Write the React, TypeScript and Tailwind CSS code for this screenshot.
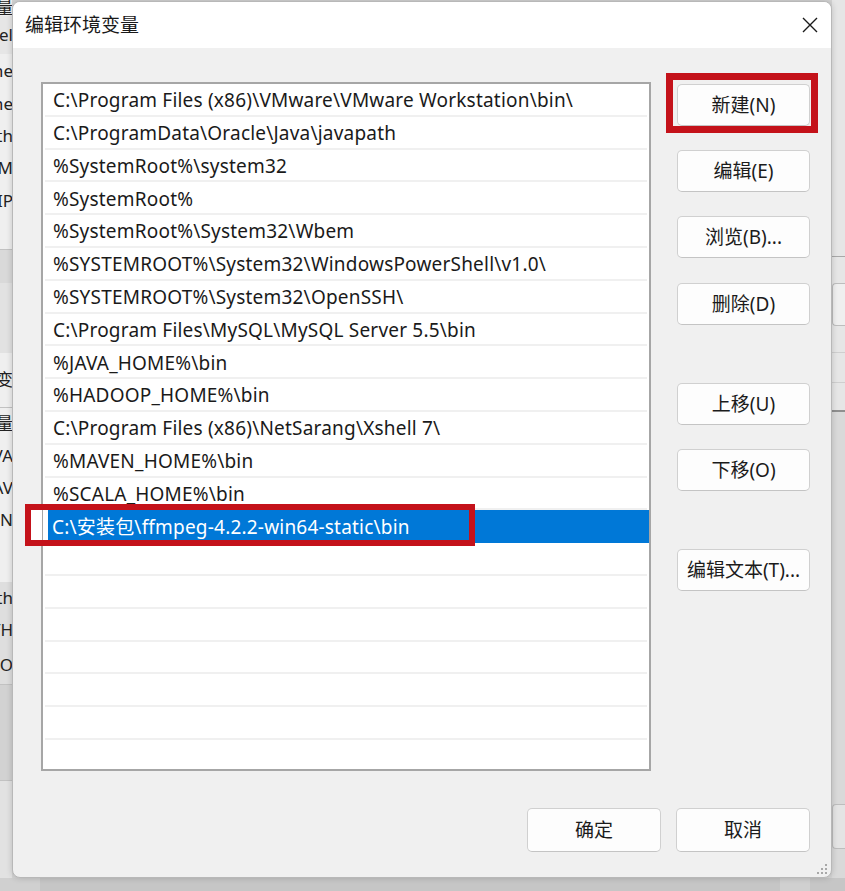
import * as React from "react";

const paths = [
  "C:\\Program Files (x86)\\VMware\\VMware Workstation\\bin\\",
  "C:\\ProgramData\\Oracle\\Java\\javapath",
  "%SystemRoot%\\system32",
  "%SystemRoot%",
  "%SystemRoot%\\System32\\Wbem",
  "%SYSTEMROOT%\\System32\\WindowsPowerShell\\v1.0\\",
  "%SYSTEMROOT%\\System32\\OpenSSH\\",
  "C:\\Program Files\\MySQL\\MySQL Server 5.5\\bin",
  "%JAVA_HOME%\\bin",
  "%HADOOP_HOME%\\bin",
  "C:\\Program Files (x86)\\NetSarang\\Xshell 7\\",
  "%MAVEN_HOME%\\bin",
  "%SCALA_HOME%\\bin",
];
const selected = "C:\\安装包\\ffmpeg-4.2.2-win64-static\\bin";

function Btn({ label, className = "" }: { label: string; className?: string }) {
  return (
    <button
      className={
        "w-[133px] h-[42px] rounded-[5px] border border-[#d0d0d0] border-b-[#c4c4c4] bg-[#fdfdfd] text-[19px] text-[#1b1b1b] flex items-center justify-center whitespace-nowrap " +
        className
      }
    >
      {label}
    </button>
  );
}

// clipped bits of the window behind the dialog
function Frag({ text, h, bg = "", line = false }: { text?: string; h: number; bg?: string; line?: boolean }) {
  return (
    <div
      className={"flex items-center justify-end overflow-hidden text-[17px] text-[#222] whitespace-nowrap " + bg + (line ? " border-b border-[#c2c2c2]" : "")}
      style={{ height: h }}
    >
      {text && <span className="-mr-[1px]">{text}</span>}
    </div>
  );
}

export default function App() {
  return (
    <div className="w-[845px] h-[891px] overflow-hidden bg-[#d4d4d4] font-['Noto_Sans','Noto_Sans_CJK_SC',sans-serif] relative flex flex-col">
      <div className="flex h-[878px]">
        {/* left strip */}
        <div className="w-[12px] flex flex-col bg-[#efefef]">
          <Frag text="变量" h={16} />
          <Frag text="Model" h={38} bg="bg-[#e6e6e6]" />
          <Frag text="Name" h={33} />
          <Frag text="Name" h={33} />
          <Frag text="Path" h={32} />
          <Frag text="VM" h={32} />
          <Frag text="IP" h={34} />
          <Frag h={32} line />
          <Frag h={33} bg="bg-[#d9d9d9]" />
          <Frag h={70} bg="bg-[#e2e2e2]" />
          <Frag text="变" h={55} line />
          <Frag text="变量" h={32} />
          <Frag text="JAVA" h={32} />
          <Frag text="JAV" h={31} />
          <Frag text="UN" h={33} />
          <Frag h={46} />
          <Frag text="Path" h={32} bg="bg-[#dedede]" />
          <Frag text="PATH" h={32} bg="bg-[#dedede]" />
          <Frag text="O" h={39} bg="bg-[#dedede]" line />
          <Frag h={96} bg="bg-[#d2d2d2]" line />
          <div className="flex-1 bg-[#e2e2e2]" />
        </div>

        {/* dialog */}
        <div className="w-[820px] mt-[1px] rounded-[8px] border border-[#b8b8b8] bg-[#f0f0f0] flex flex-col relative overflow-hidden shadow-[0_0_6px_rgba(0,0,0,0.18)]">
          <div className="h-[46px] bg-white flex items-center justify-between pl-[12px] pr-[13px]">
            <span className="text-[19px] text-[#1a1a1a]">编辑环境变量</span>
            <svg width="16" height="16" viewBox="0 0 16 16">
              <path d="M1 1 L15 15 M15 1 L1 15" stroke="#1a1a1a" strokeWidth="1.4" fill="none" />
            </svg>
          </div>

          <div className="flex-1 flex flex-col pl-[28px] pt-[34px] pr-[21px]">
            <div className="flex">
              <div className="w-[610px] h-[689px] border-2 border-[#a6a6a6] bg-white overflow-hidden">
                {paths.map((p) => (
                  <div key={p} className="h-[32.8px] mx-[2px] border-b-2 border-[#f0f0f0] flex items-center pl-[8px] pt-[2px] text-[19px] tracking-[0.2px] text-[#1a1a1a] whitespace-nowrap">
                    {p}
                  </div>
                ))}
                <div className="h-[32.8px] pl-[5px] flex">
                  <div className="flex-1 bg-[#0078d7] flex items-center pl-[4px] pt-[1px] text-[19px] tracking-[0.2px] text-white whitespace-nowrap">
                    {selected}
                  </div>
                </div>
                {Array.from({ length: 7 }).map((_, i) => (
                  <div key={i} className="h-[32.8px] mx-[2px] border-b-2 border-[#f0f0f0]" />
                ))}
              </div>

              <div className="ml-[26px] mt-[2px] flex flex-col">
                <div className="relative">
                  <Btn label="新建(N)" />
                  <div className="absolute left-[-11px] right-[-8px] top-[-11px] bottom-[-7px] border-[7px] border-[#c4121a]" />
                </div>
                <Btn label="编辑(E)" className="mt-[24px]" />
                <Btn label="浏览(B)..." className="mt-[24px]" />
                <Btn label="删除(D)" className="mt-[25px]" />
                <Btn label="上移(U)" className="mt-[58px]" />
                <Btn label="下移(O)" className="mt-[24px]" />
                <Btn label="编辑文本(T)..." className="mt-[58px]" />
              </div>
            </div>

            <div className="flex justify-end gap-[15px] mt-[37px]">
              <Btn label="确定" className="w-[134px] h-[44px]" />
              <Btn label="取消" className="w-[134px] h-[44px]" />
            </div>
          </div>

          <svg width="12" height="12" viewBox="0 0 12 12" className="absolute right-[3px] bottom-[2px]">
            {[
              [10, 2],
              [6, 6],
              [10, 6],
              [2, 10],
              [6, 10],
              [10, 10],
            ].map(([x, y]) => (
              <rect key={x + "-" + y} x={x - 1} y={y - 1} width="2" height="2" fill="#a8a8a8" />
            ))}
          </svg>
        </div>

        {/* right strip */}
        <div className="flex-1 flex flex-col bg-[#e6e6e6]">
          <div className="h-[257px] border-b border-[#a8a8a8]" />
          <div className="h-[26px]" />
          <div className="h-[43px] border border-r-0 border-[#bdbdbd] rounded-l-[4px] bg-[#efefef]" />
          <div className="h-[27px] border-b border-[#cfcfcf]" />
          <div className="h-[30px] border-b border-[#cfcfcf]" />
          <div className="h-[29px] border-b-2 border-[#8f8f8f]" />
          <div className="flex-1 bg-[#d9d9d9] flex flex-col">
            <div className="h-[392px]" />
            <div className="h-[45px] border border-r-0 border-[#bdbdbd] rounded-l-[4px] bg-[#e4e4e4]" />
          </div>
        </div>
      </div>

      {/* bottom strip */}
      <div className="flex-1 flex bg-[#c6c6c6]">
        <div className="w-[40px] bg-[#d0d0d0]" />
        <div className="w-[740px]" />
        <div className="w-[30px] bg-[#d0d0d0]" />
      </div>

      {/* annotation box on the new entry */}
      <div className="absolute left-[25px] top-[504px] w-[450px] h-[42px] border-[6px] border-[#c4121a]">
        <div className="absolute left-0 top-0 bottom-0 w-[11px] bg-white" />
      </div>
    </div>
  );
}
